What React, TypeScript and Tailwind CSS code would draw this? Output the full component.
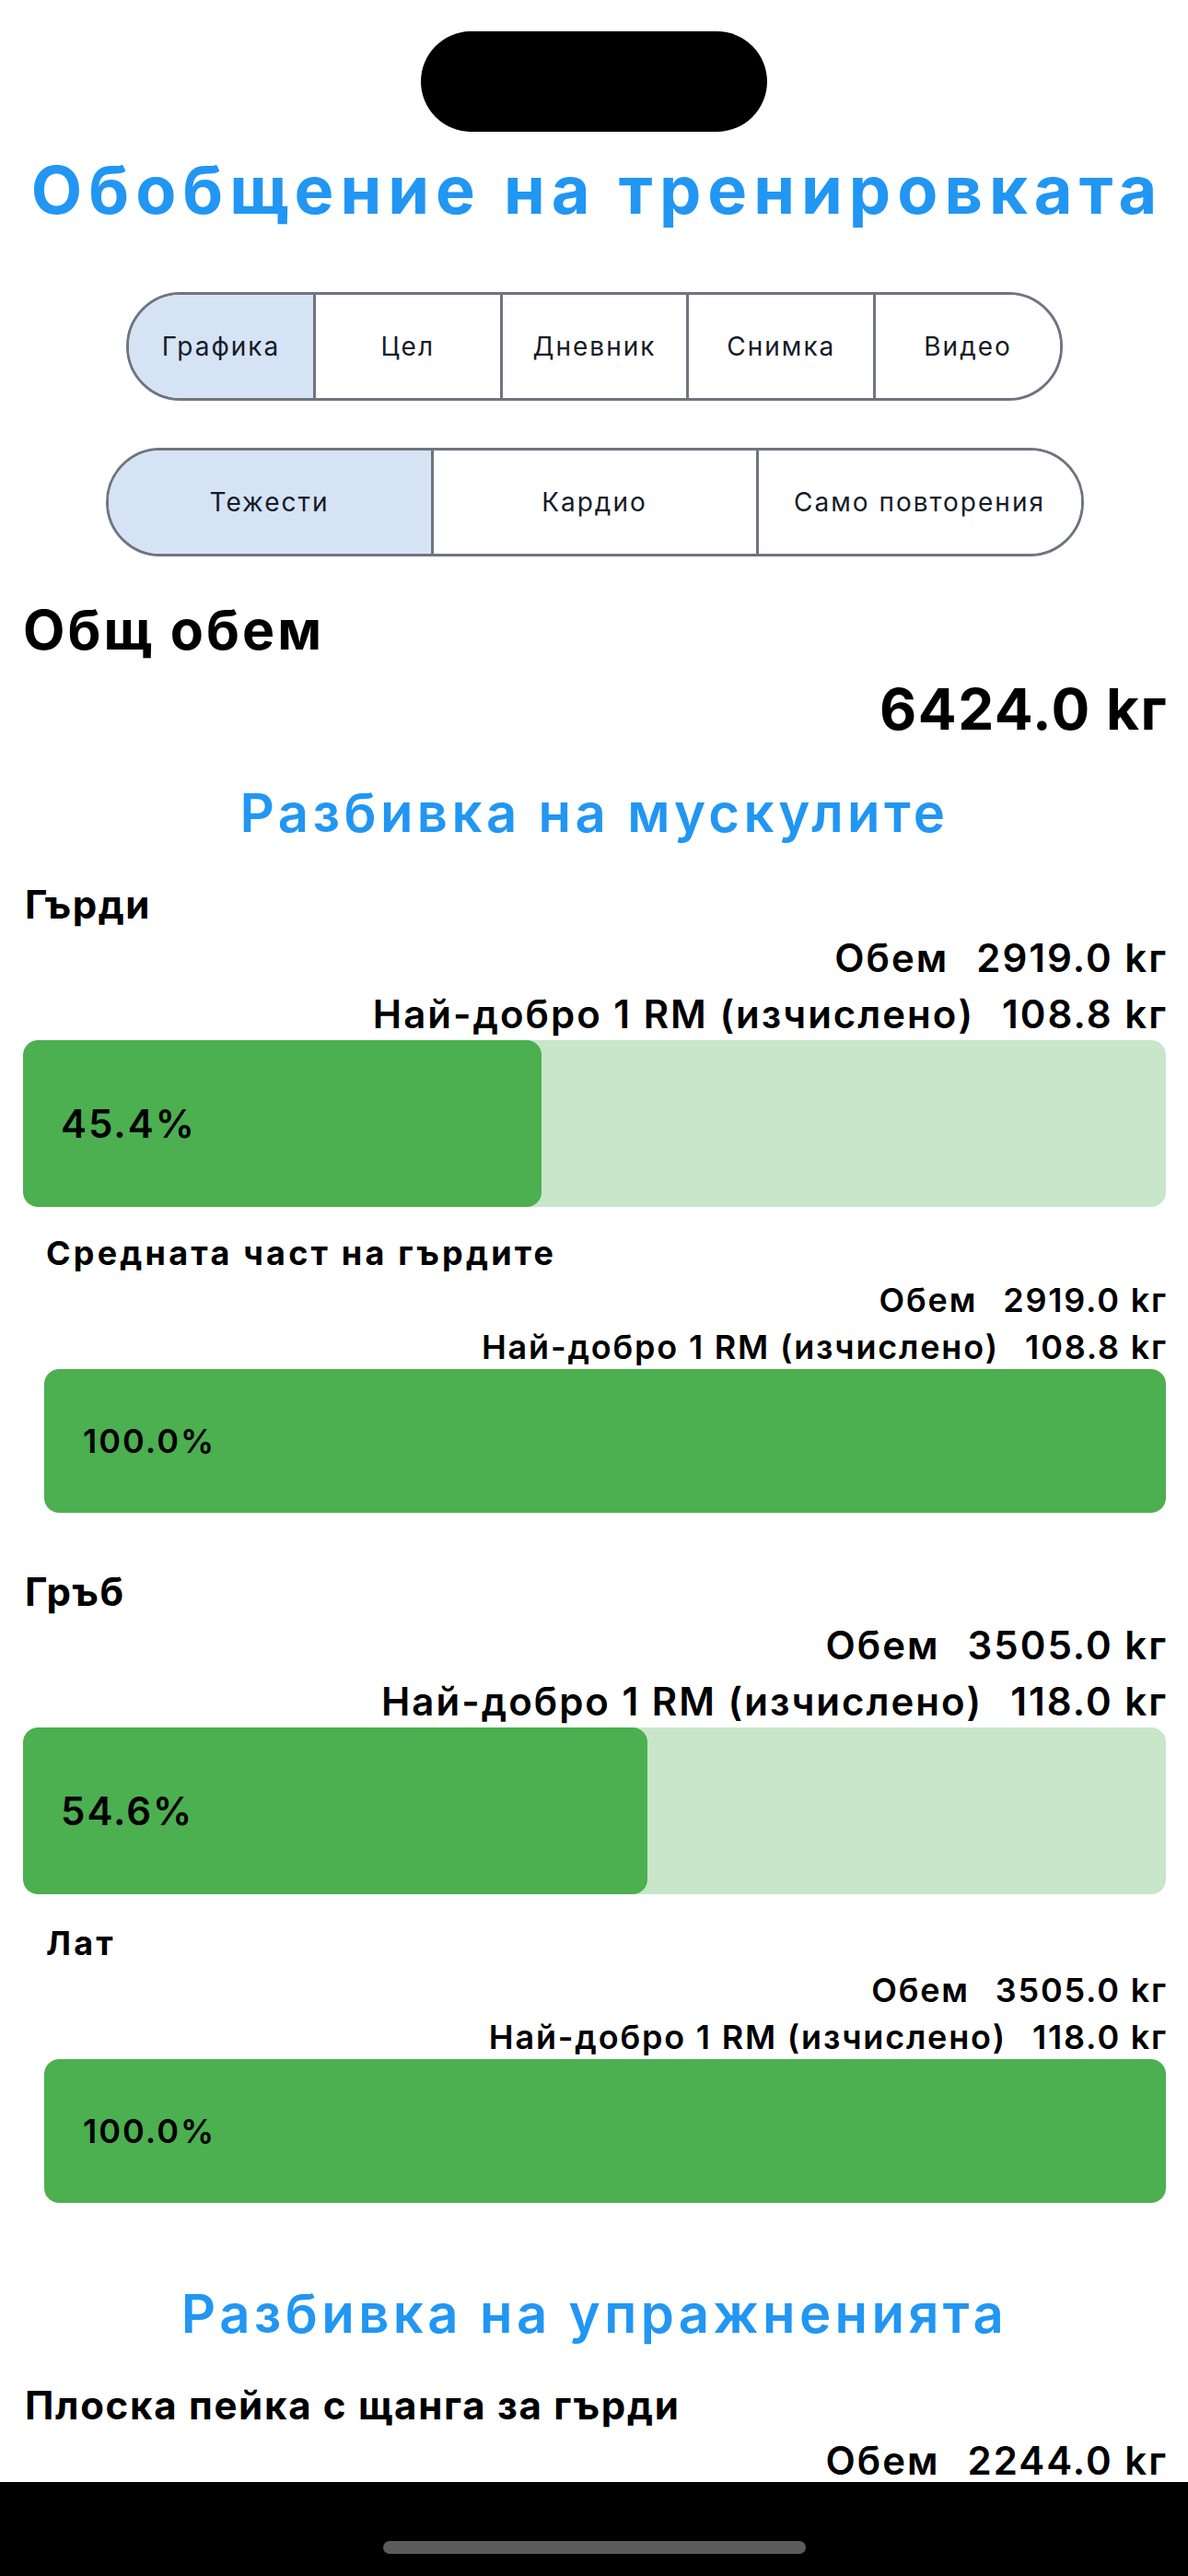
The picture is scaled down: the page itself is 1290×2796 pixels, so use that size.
type Stat = { volume: string; orm: string };

function SegmentBar({ items, selected, className }: { items: string[]; selected: number; className: string }) {
  return (
    <div className={`mx-auto flex h-[118px] overflow-hidden rounded-full border-[3px] border-[#6f7580] ${className}`}>
      {items.map((item, i) => (
        <div
          key={item}
          className={`flex flex-1 items-center justify-center text-[28px] leading-none tracking-[2px] text-[#151b27] ${
            i > 0 ? "border-l-[3px] border-[#6f7580]" : ""
          } ${i === selected ? "bg-[#d5e3f5]" : "bg-white"}`}
        >
          {item}
        </div>
      ))}
    </div>
  );
}

function Bar({ pct, sub }: { pct: number; sub?: boolean }) {
  return (
    <div
      className={`relative overflow-hidden rounded-[16px] bg-[#c8e6c9] ${
        sub ? "mt-[2px] h-[156px]" : "mt-[3px] h-[181px]"
      }`}
    >
      <div className="absolute inset-y-0 left-0 rounded-[16px] bg-[#4caf50]" style={{ width: `${pct}%` }} />
      <div
        className={`relative flex h-full items-center font-semibold tracking-[2px] text-black ${
          sub ? "pl-[42px] text-[36px]" : "pl-[41px] text-[42px]"
        }`}
      >
        {pct.toFixed(1)}%
      </div>
    </div>
  );
}

function StatLine({ label, value, sub, className }: { label: string; value: string; sub?: boolean; className: string }) {
  return (
    <div
      className={`flex justify-end font-semibold text-black ${
        sub
          ? "gap-[28px] text-[36px] leading-[44px] tracking-[1.8px]"
          : "gap-[30px] text-[42px] leading-[50px] tracking-[2px]"
      } ${className}`}
    >
      <span>{label}</span>
      <span className="-mr-[2px]">{value}</span>
    </div>
  );
}

function MuscleBlock({ name, stat, pct, sub, className }: { name: string; stat: Stat; pct: number; sub?: boolean; className: string }) {
  return (
    <div className={`${sub ? "ml-[23px]" : ""} ${className}`}>
      <div
        className={`pl-[2px] font-bold text-black ${
          sub ? "text-[36px] leading-[44px] tracking-[3.2px]" : "text-[42px] leading-[50px] tracking-[1.5px]"
        }`}
      >
        {name}
      </div>
      <StatLine label="Обем" value={stat.volume} sub={sub} className={sub ? "mt-[7px]" : "mt-[8px]"} />
      <StatLine
        label="Най-добро 1 RM (изчислено)"
        value={stat.orm}
        sub={sub}
        className={sub ? "mt-[7px]" : "mt-[11px]"}
      />
      <Bar pct={pct} sub={sub} />
    </div>
  );
}

export default function App() {
  return (
    <div
      lang="bg"
      className="relative h-[2796px] w-[1290px] overflow-hidden bg-white font-['Inter','Noto_Sans',sans-serif] text-black"
    >
      {/* dynamic island */}
      <div className="absolute left-[457px] top-[34px] h-[109px] w-[376px] rounded-full bg-black" />

      <div className="pl-[25px] pr-[24px] pt-[161px]">
        <h1 className="-mx-[20px] pl-[6px] text-center text-[72px] font-bold leading-[90px] tracking-[7px] text-[#2196f3]">
          Обобщение на тренировката
        </h1>

        <SegmentBar
          items={["Графика", "Цел", "Дневник", "Снимка", "Видео"]}
          selected={0}
          className="mt-[66px] w-[1017px]"
        />
        <SegmentBar items={["Тежести", "Кардио", "Само повторения"]} selected={0} className="mt-[51px] w-[1062px]" />

        <div className="mt-[50px] text-[59px] font-bold leading-[60px] tracking-[3px]">Общ обем</div>
        <div className="-mr-[2px] mt-[24px] text-right text-[62px] font-bold leading-[64px] tracking-[1.5px]">
          6424.0 kг
        </div>

        <h2 className="mt-[45px] text-center text-[58px] font-semibold leading-[70px] tracking-[4.4px] text-[#2196f3]">
          Разбивка на мускулите
        </h2>

        <MuscleBlock name="Гърди" stat={{ volume: "2919.0 kг", orm: "108.8 kг" }} pct={45.4} className="mt-[40px]" />
        <MuscleBlock
          name="Средната част на гърдите"
          stat={{ volume: "2919.0 kг", orm: "108.8 kг" }}
          pct={100}
          sub
          className="mt-[28px]"
        />
        <MuscleBlock name="Гръб" stat={{ volume: "3505.0 kг", orm: "118.0 kг" }} pct={54.6} className="mt-[61px]" />
        <MuscleBlock name="Лат" stat={{ volume: "3505.0 kг", orm: "118.0 kг" }} pct={100} sub className="mt-[31px]" />

        <h2 className="mt-[85px] text-center text-[58px] font-semibold leading-[70px] tracking-[4.4px] text-[#2196f3]">
          Разбивка на упражненията
        </h2>

        <div className="mt-[40px] pl-[2px] text-[42px] font-bold leading-[50px] tracking-[1.7px]">
          Плоска пейка с щанга за гърди
        </div>
        <StatLine label="Обем" value="2244.0 kг" className="mt-[10px]" />
        <StatLine label="Най-добро 1 RM (изчислено)" value="108.8 kг" className="mt-[11px]" />
      </div>

      {/* home indicator area */}
      <div className="absolute inset-x-0 bottom-0 flex h-[102px] items-end justify-center bg-black pb-[24px]">
        <div className="h-[14px] w-[459px] rounded-full bg-[#5b5b5b]" />
      </div>
    </div>
  );
}
